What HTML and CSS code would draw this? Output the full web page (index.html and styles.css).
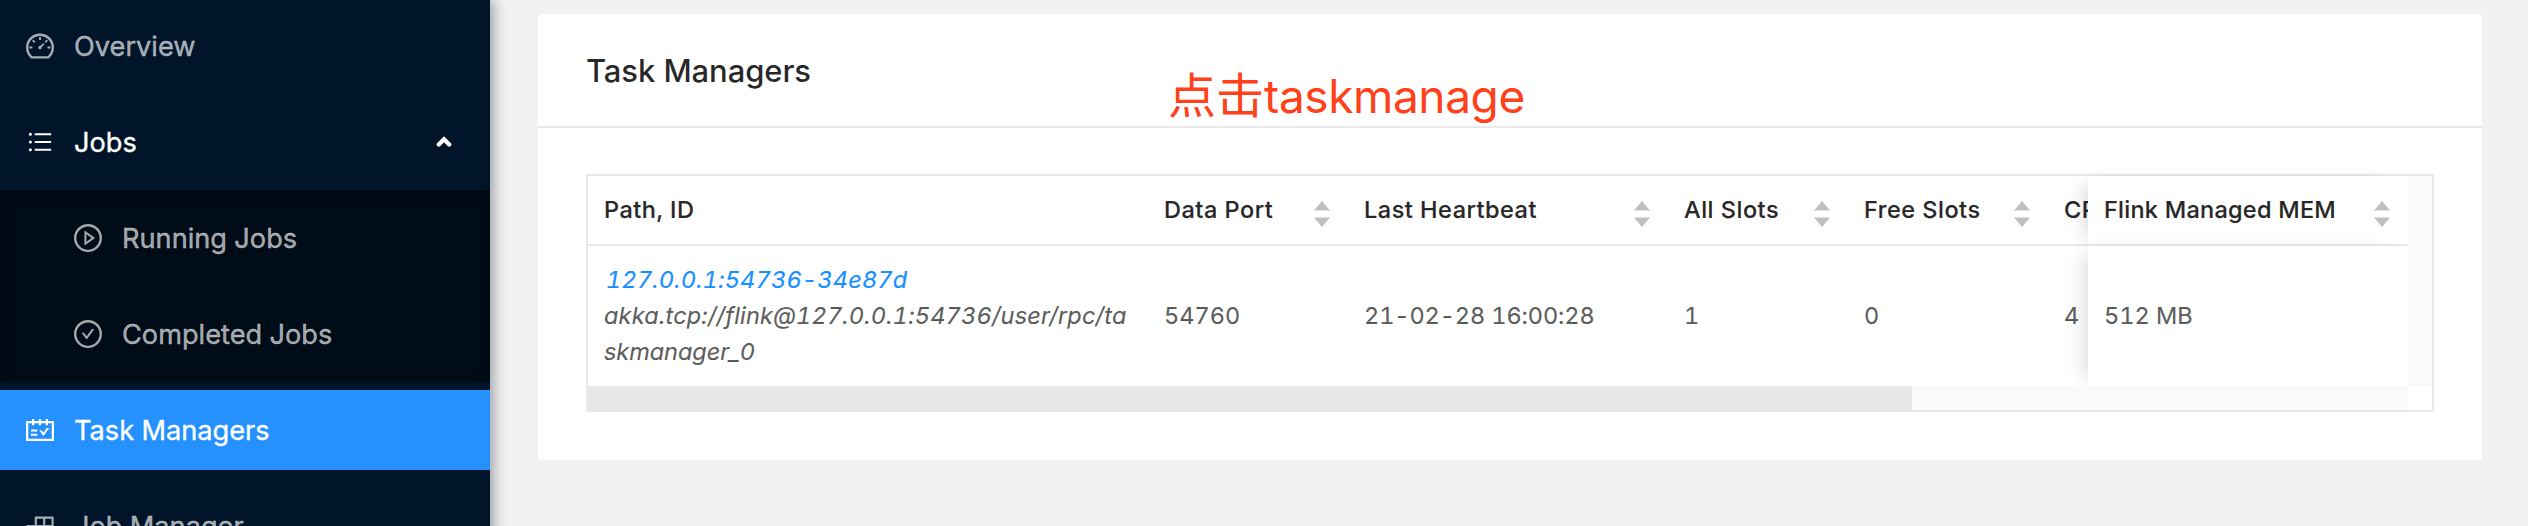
FILE: index.html
```html
<!DOCTYPE html>
<html lang="en">
<head>
<meta charset="utf-8">
<title>Task Managers</title>
<link rel="stylesheet" href="styles.css">
</head>
<body>
<div class="app">
  <nav class="sidebar">
    <a class="item"><svg class="icon" viewBox="64 64 896 896"><path d="M924.8 385.6a446.7 446.7 0 00-96-142.4 446.7 446.7 0 00-142.4-96C631.1 123.8 572.5 112 512 112s-119.1 11.8-174.4 35.2a446.7 446.7 0 00-142.4 96 446.7 446.7 0 00-96 142.4C75.8 440.9 64 499.5 64 560c0 132.7 58.3 257.7 159.9 343.1l1.7 1.4c5.8 4.8 13.1 7.5 20.6 7.5h531.7c7.5 0 14.8-2.7 20.6-7.5l1.7-1.4C901.7 817.7 960 692.7 960 560c0-60.5-11.9-119.1-35.2-174.4zM761.4 836H262.6A371.12 371.12 0 01140 560c0-99.4 38.7-192.8 109-263 70.3-70.3 163.7-109 263-109 99.4 0 192.8 38.7 263 109 70.3 70.3 109 163.7 109 263 0 105.6-44.5 205.5-122.6 276zM623.5 421.5a8.03 8.03 0 00-11.3 0L527.7 506c-18.7-5-39.4-.2-54.1 14.5a55.95 55.95 0 000 79.2 55.95 55.95 0 0079.2 0 55.87 55.87 0 0014.5-54.1l84.5-84.5c3.1-3.1 3.1-8.2 0-11.3l-28.3-28.3zM490 320h44c4.4 0 8-3.6 8-8v-80c0-4.4-3.6-8-8-8h-44c-4.4 0-8 3.6-8 8v80c0 4.4 3.6 8 8 8zm260 218v44c0 4.4 3.6 8 8 8h80c4.4 0 8-3.6 8-8v-44c0-4.4-3.6-8-8-8h-80c-4.4 0-8 3.6-8 8zm12.7-197.2l-31.1-31.1a8.03 8.03 0 00-11.3 0l-56.6 56.6a8.03 8.03 0 000 11.3l31.1 31.1c3.1 3.1 8.2 3.1 11.3 0l56.6-56.6c3.1-3.1 3.1-8.2 0-11.3zm-458.6-31.1a8.03 8.03 0 00-11.3 0l-31.1 31.1a8.03 8.03 0 000 11.3l56.6 56.6c3.1 3.1 8.2 3.1 11.3 0l31.1-31.1c3.1-3.1 3.1-8.2 0-11.3l-56.6-56.6zM262 530h-80c-4.4 0-8 3.6-8 8v44c0 4.4 3.6 8 8 8h80c4.4 0 8-3.6 8-8v-44c0-4.4-3.6-8-8-8z"/></svg><span>Overview</span></a>
    <a class="item open"><svg class="icon" viewBox="0 0 1024 1024"><path d="M912 192H328c-4.400 0-8 3.600-8 8v56c0 4.400 3.600 8 8 8h584c4.400 0 8-3.600 8-8v-56c0-4.400-3.600-8-8-8zm0 284H328c-4.400 0-8 3.600-8 8v56c0 4.400 3.600 8 8 8h584c4.400 0 8-3.600 8-8v-56c0-4.400-3.600-8-8-8zm0 284H328c-4.400 0-8 3.600-8 8v56c0 4.400 3.600 8 8 8h584c4.400 0 8-3.600 8-8v-56c0-4.400-3.600-8-8-8zM104 228a56 56 0 10112 0 56 56 0 10-112 0zm0 284a56 56 0 10112 0 56 56 0 10-112 0zm0 284a56 56 0 10112 0 56 56 0 10-112 0z"/></svg><span>Jobs</span><svg class="arrow" viewBox="0 0 16 12"><path d="M2.800 8.500L8 3.300l5.200 5.200"/></svg></a>
    <div class="submenu">
      <a class="item sub"><svg class="icon" viewBox="64 64 896 896"><path d="M512 64C264.600 64 64 264.600 64 512s200.600 448 448 448 448-200.600 448-448S759.400 64 512 64zm0 820c-205.400 0-372-166.600-372-372s166.600-372 372-372 372 166.600 372 372-166.600 372-372 372z"/><path d="M719.400 499.100l-296.100-215A15.900 15.900 0 00398 297v430c0 13.100 14.800 20.500 25.300 12.900l296.100-215a15.900 15.900 0 000-25.800zm-257.600 134V390.900L628.500 512 461.800 633.100z"/></svg><span>Running Jobs</span></a>
      <a class="item sub"><svg class="icon" viewBox="64 64 896 896"><path d="M512 64C264.600 64 64 264.600 64 512s200.600 448 448 448 448-200.600 448-448S759.400 64 512 64zm0 820c-205.400 0-372-166.600-372-372s166.600-372 372-372 372 166.600 372 372-166.600 372-372 372z"/><path d="M699 353h-46.900c-10.200 0-19.900 4.900-25.900 13.300L469 584.300l-71.200-98.800c-6-8.300-15.600-13.300-25.900-13.300H325c-6.500 0-10.300 7.400-6.500 12.700l124.600 172.800a31.800 31.800 0 0051.700 0l210.600-292c3.900-5.300.1-12.700-6.400-12.700z"/></svg><span>Completed Jobs</span></a>
    </div>
    <a class="item selected"><svg class="icon" viewBox="64 64 896 896"><path d="M928 224H768v-56c0-4.400-3.600-8-8-8h-56c-4.400 0-8 3.600-8 8v56H548v-56c0-4.400-3.600-8-8-8h-56c-4.400 0-8 3.600-8 8v56H328v-56c0-4.400-3.600-8-8-8h-56c-4.400 0-8 3.600-8 8v56H96c-17.700 0-32 14.300-32 32v576c0 17.700 14.300 32 32 32h832c17.700 0 32-14.300 32-32V256c0-17.700-14.300-32-32-32zm-40 568H136V296h120v56c0 4.400 3.600 8 8 8h56c4.400 0 8-3.600 8-8v-56h148v56c0 4.400 3.600 8 8 8h56c4.400 0 8-3.600 8-8v-56h148v56c0 4.400 3.600 8 8 8h56c4.400 0 8-3.600 8-8v-56h120v496zM416 496H232c-4.400 0-8 3.600-8 8v48c0 4.400 3.600 8 8 8h184c4.400 0 8-3.600 8-8v-48c0-4.400-3.600-8-8-8zm0 136H232c-4.400 0-8 3.600-8 8v48c0 4.400 3.600 8 8 8h184c4.400 0 8-3.600 8-8v-48c0-4.400-3.600-8-8-8zm308.200-177.400L620.600 598.300l-52.800-73.100c-3-4.200-7.800-6.600-12.900-6.600H500c-6.500 0-10.300 7.400-6.500 12.700l114.100 158.200a15.900 15.900 0 0025.800 0l165-228.700c3.800-5.300 0-12.700-6.500-12.700H737c-5-.1-9.800 2.400-12.800 6.500z"/></svg><span>Task Managers</span></a>
    <a class="item"><svg class="icon" viewBox="64 64 896 896"><path d="M916 210H376c-17.700 0-32 14.300-32 32v236H108c-17.700 0-32 14.300-32 32v272c0 17.700 14.300 32 32 32h540c17.700 0 32-14.300 32-32V546h236c17.700 0 32-14.300 32-32V242c0-17.700-14.300-32-32-32zm-504 68h200v200H412V278zm-68 468H144V546h200v200zm268 0H412V546h200v200zm268-268H680V278h200v200z"/></svg><span>Job Manager</span></a>
  </nav>
  <main class="content">
    <section class="card">
      <header class="card-head"><span>Task Managers</span></header>
      <div class="card-body">
        <div class="table">
          <div class="scroll">
            <div class="row head">
              <div class="cell"><span>Path, ID</span></div>
              <div class="cell"><span>Data Port</span><svg class="sorter" viewBox="0 0 16 26"><path d="M8 0l8 9.500H0zM8 26l8-9.500H0z"/></svg></div>
              <div class="cell"><span>Last Heartbeat</span><svg class="sorter" viewBox="0 0 16 26"><path d="M8 0l8 9.500H0zM8 26l8-9.500H0z"/></svg></div>
              <div class="cell"><span>All Slots</span><svg class="sorter" viewBox="0 0 16 26"><path d="M8 0l8 9.500H0zM8 26l8-9.500H0z"/></svg></div>
              <div class="cell"><span>Free Slots</span><svg class="sorter" viewBox="0 0 16 26"><path d="M8 0l8 9.500H0zM8 26l8-9.500H0z"/></svg></div>
              <div class="cell"><span>CPU</span></div>
            </div>
            <div class="row">
              <div class="cell path"><span class="link">127.0.0.1:54736-34e87d</span><span class="akka">akka.tcp://flink@127.0.0.1:54736/user/rpc/ta</span><span class="akka-end">skmanager_0</span></div>
              <div class="cell"><span>54760</span></div>
              <div class="cell"><span class="date">21-02-28 16:00:28</span></div>
              <div class="cell"><span>1</span></div>
              <div class="cell"><span>0</span></div>
              <div class="cell"><span>4</span></div>
            </div>
          </div>
          <div class="fixed">
            <div class="row head"><div class="cell"><span class="mem">Flink Managed MEM</span><svg class="sorter" viewBox="0 0 16 26"><path d="M8 0l8 9.500H0zM8 26l8-9.500H0z"/></svg></div></div>
            <div class="row"><div class="cell"><span>512 MB</span></div></div>
          </div>
          <div class="gutter"></div>
          <div class="track"><div class="thumb"></div></div>
        </div>
      </div>
    </section>
    <div class="note"><span class="cjk">点击</span><span class="latin">taskmanage</span></div>
  </main>
</div>
</body>
</html>
```
FILE: styles.css
```css
* { box-sizing: border-box; }

body {
  margin: 0;
  height: 526px;
  overflow: hidden;
  background: #f1f1f1;
  font-family: Inter, "Noto Sans CJK SC", sans-serif;
  font-variant-numeric: tabular-nums;
}

.app { display: flex; height: 526px; overflow: hidden; }

.sidebar {
  flex: none;
  width: 490px;
  height: 580px;
  padding-top: 6px;
  background: #001529;
  box-shadow: 4px 0 12px rgba(0, 21, 41, .35);
}

.item {
  display: flex;
  align-items: center;
  height: 80px;
  margin-bottom: 16px;
  padding: 0 38px 0 26px;
  color: rgba(255, 255, 255, .65);
  font-size: 27.2px;
  -webkit-text-stroke: .35px currentColor;
}
.item.open { margin-bottom: 8px; color: #fff; }
.item.selected { color: #fff; background: #2491ff; }
.item.sub { padding-left: 74px; }
.item.sub:last-child { margin-bottom: 0; }

.submenu {
  height: 192px;
  margin-bottom: 8px;
  padding-top: 8px;
  background: #000c17;
  box-shadow: inset 0 4px 12px rgba(0, 0, 0, .35);
}

.icon { flex: none; width: 28px; height: 28px; margin-right: 20px; fill: currentColor; }
.arrow { width: 16px; height: 12px; margin-left: auto; fill: none; stroke: #fff; stroke-width: 4.4; stroke-linecap: round; }

.content { position: relative; flex: 1; padding: 14px 46px 0 48px; }

.card { height: 446px; border-radius: 4px; background: #fff; }
.card-head {
  height: 114px;
  padding-left: 48px;
  border-bottom: 2px solid #e8e8e8;
  color: rgba(0, 0, 0, .85);
  font-size: 31px;
  font-weight: 500;
  letter-spacing: -.1px;
  line-height: 113px;
}
.card-body { padding: 46px 48px 48px; }

.table {
  display: grid;
  grid-template-columns: 1500px 320px 24px;
  grid-template-rows: 210px 24px;
  border: 2px solid #e8e8e8;
  color: rgba(0, 0, 0, .65);
  font-size: 23.5px;
  line-height: 36px;
  -webkit-text-stroke: .2px currentColor;
}
.scroll { overflow: hidden; }
.row { display: grid; grid-template-columns: 560px 200px 320px 180px 200px 40px; height: 140px; }
.row.head { height: 70px; border-bottom: 2px solid #e8e8e8; color: rgba(0, 0, 0, .85); font-weight: 500; letter-spacing: .5px; }
.cell { display: flex; align-items: center; padding: 0 18px 0 16px; white-space: nowrap; }
.path { flex-direction: column; align-items: flex-start; justify-content: center; font-style: italic; }
.link { margin-left: 2px; color: #1890ff; letter-spacing: .2px; }
.akka { letter-spacing: .2px; }
.akka-end { letter-spacing: -.05px; }
.date { letter-spacing: -.1px; }
.sorter { flex: none; width: 16px; height: 26px; margin: 7px 0 0 auto; fill: #bfbfbf; }

.fixed { position: relative; }
.fixed .row { grid-template-columns: 320px; background: #fff; box-shadow: -12px 0 18px -8px rgba(0, 0, 0, .14); }
.mem { letter-spacing: .25px; }
.gutter { position: relative; background: #fafafa; }
.track { position: relative; grid-column: 1 / 3; background: #fafafa; }
.thumb { width: 1324px; height: 26px; background: #e7e7e7; }

.note {
  position: absolute;
  left: 678px;
  top: 56px;
  display: flex;
  align-items: baseline;
  color: #ff4019;
  font-size: 46px;
  line-height: 72px;
}
.cjk { font-family: "Noto Sans CJK SC", sans-serif; font-size: 48px; }
.latin { letter-spacing: -.4px; }
```
